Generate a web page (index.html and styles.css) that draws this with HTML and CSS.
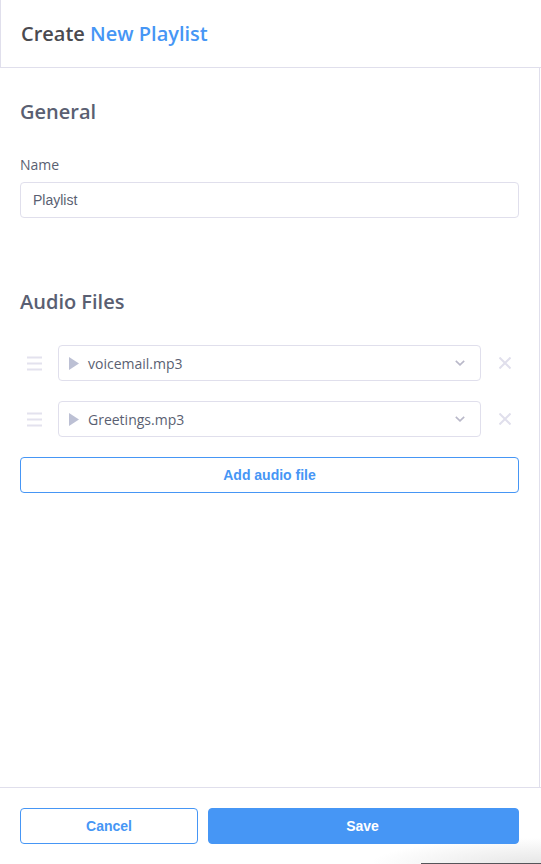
FILE: index.html
```html
<!DOCTYPE html>
<html lang="en">
<head>
<meta charset="utf-8">
<title>Create New Playlist</title>
<link rel="stylesheet" href="styles.css">
</head>
<body>
<div class="page">
  <div class="corner-shadow"></div>
  <header class="head"><h1 class="title">Create <span class="accent">New Playlist</span></h1></header>
  <main class="panel">
    <section class="general">
      <h2 class="section-title">General</h2>
      <label class="label" for="name">Name</label>
      <input class="input" id="name" value="Playlist">
    </section>
    <section class="audio">
      <h2 class="section-title">Audio Files</h2>
      <div class="rows">
        <div class="row">
          <svg class="drag" viewBox="0 0 15 15" width="15" height="15"><path d="M0 1.500h15M0 7.500h15M0 13.500h15"/></svg>
          <div class="select">
            <svg class="play" viewBox="0 0 10 13" width="10" height="13"><path d="M0 0l10 6.500-10 6.500z"/></svg>
            <span class="file">voicemail.mp3</span>
            <svg class="chev" viewBox="0 0 10 6" width="10" height="6"><path d="M.8.8L5 4.800 9.200.8"/></svg>
          </div>
          <svg class="close" viewBox="0 0 12 12" width="12" height="12"><path d="M.5.5l11 11M11.500.5l-11 11"/></svg>
        </div>
        <div class="row">
          <svg class="drag" viewBox="0 0 15 15" width="15" height="15"><path d="M0 1.500h15M0 7.500h15M0 13.500h15"/></svg>
          <div class="select">
            <svg class="play" viewBox="0 0 10 13" width="10" height="13"><path d="M0 0l10 6.500-10 6.500z"/></svg>
            <span class="file">Greetings.mp3</span>
            <svg class="chev" viewBox="0 0 10 6" width="10" height="6"><path d="M.8.8L5 4.800 9.200.8"/></svg>
          </div>
          <svg class="close" viewBox="0 0 12 12" width="12" height="12"><path d="M.5.5l11 11M11.500.5l-11 11"/></svg>
        </div>
      </div>
      <button class="btn btn-outline btn-add" type="button">Add audio file</button>
    </section>
  </main>
  <footer class="foot">
    <button class="btn btn-outline btn-cancel" type="button">Cancel</button>
    <button class="btn btn-primary btn-save" type="button">Save</button>
  </footer>
  <div class="corner-line"></div>
</div>
</body>
</html>
```

FILE: styles.css
```css
* { box-sizing: border-box; }
html, body { margin: 0; height: 100%; background: #fff; overflow: hidden; }
.page {
  position: relative;
  width: 541px;
  height: 864px;
  display: flex;
  flex-direction: column;
  font-family: "Open Sans", sans-serif;
  color: #5a5f72;
}
.head {
  height: 68px;
  flex: none;
  display: flex;
  align-items: center;
  padding-left: 20px;
  border-left: 1px solid #e0dfec;
  border-bottom: 1px solid #e0dfec;
}
.title {
  margin: 0;
  font-size: 20px;
  line-height: 28px;
  font-weight: 600;
  color: #4a4a4f;
}
.accent { color: #4696f5; }
.panel {
  flex: 1;
  width: 540px;
  padding: 0 20px;
  border-right: 1px solid #e0dfec;
}
.general { padding-top: 30px; }
.section-title {
  margin: 0;
  font-size: 20px;
  line-height: 28px;
  font-weight: 600;
  color: #5a5f72;
}
.label {
  display: block;
  margin-top: 29px;
  font-size: 14px;
  line-height: 20px;
  color: #5a5f72;
}
.input {
  display: block;
  width: 499px;
  height: 36px;
  margin-top: 7px;
  padding: 0 12px;
  border: 1px solid #e0dfec;
  border-radius: 4px;
  background: #fff;
  font-family: "Liberation Sans", Arial, sans-serif;
  font-size: 14px;
  color: #5a5f72;
  outline: none;
}
.audio { margin-top: 70px; }
.rows {
  margin-top: 29px;
  display: flex;
  flex-direction: column;
  gap: 20px;
}
.row {
  display: flex;
  align-items: center;
  height: 36px;
  width: 499px;
}
.drag { flex: none; margin-left: 7px; fill: none; stroke: #e3e2ee; stroke-width: 2; }
.select {
  flex: none;
  width: 423px;
  height: 36px;
  margin-left: 16px;
  display: flex;
  align-items: center;
  padding: 0 15px 0 10px;
  border: 1px solid #e0dfec;
  border-radius: 4px;
  background: #fff;
}
.play { flex: none; fill: #bcc0d4; }
.file {
  flex: 1;
  margin-left: 9px;
  padding-top: 2px;
  font-size: 14px;
  line-height: 20px;
  color: #5a5f72;
}
.chev { flex: none; fill: none; stroke: #b9b8c9; stroke-width: 1.6; }
.close { flex: none; margin-left: 18px; fill: none; stroke: #e0dfec; stroke-width: 2; }
.btn {
  display: block;
  height: 36px;
  border-radius: 4px;
  font-family: "Liberation Sans", Arial, sans-serif;
  font-size: 14px;
  font-weight: 700;
  cursor: pointer;
}
.btn-outline { border: 1px solid #4696f5; background: #fff; color: #4696f5; }
.btn-primary { border: 1px solid #4696f5; background: #4696f5; color: #fff; }
.btn-add { width: 499px; margin-top: 20px; }
.foot {
  flex: none;
  height: 77px;
  display: flex;
  gap: 10px;
  padding: 20px 0 0 20px;
  border-top: 1px solid #e0dfec;
  position: relative;
}
.btn-cancel { width: 178px; }
.btn-save { width: 311px; padding: 0 2px 0 0; }
.corner-shadow {
  position: absolute;
  right: 0;
  bottom: 0;
  width: 170px;
  height: 26px;
  background: radial-gradient(farthest-side at 100% 100%, #e6e6e6 0%, #f2f2f2 50%, rgba(255,255,255,0) 100%);
  pointer-events: none;
}
.corner-line {
  position: absolute;
  right: 0;
  bottom: 0;
  width: 120px;
  height: 1px;
  background: #55555a;
}
```
